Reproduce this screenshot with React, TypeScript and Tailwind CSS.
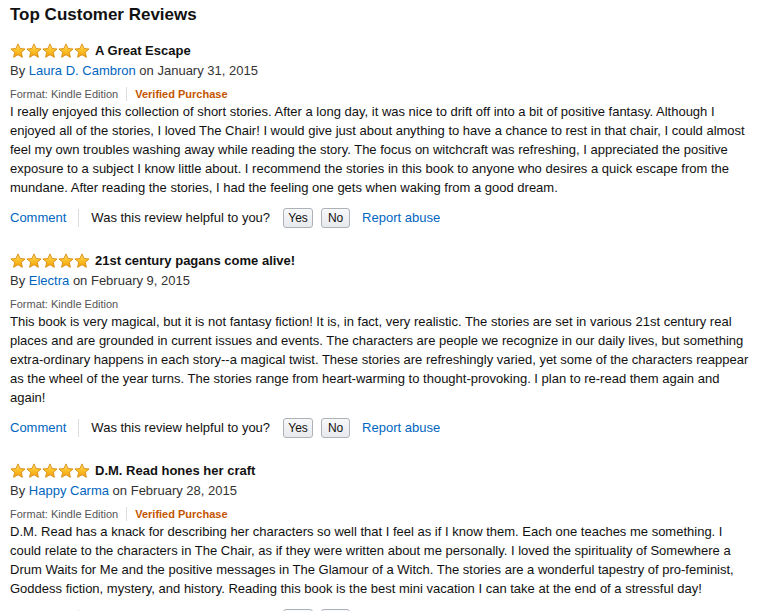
import React from 'react'

type Review = {
  title: string
  author: string
  date: string
  verified: boolean
  body: string
}

const REVIEWS: Review[] = [
  {
    title: 'A Great Escape',
    author: 'Laura D. Cambron',
    date: 'January 31, 2015',
    verified: true,
    body: 'I really enjoyed this collection of short stories. After a long day, it was nice to drift off into a bit of positive fantasy. Although I enjoyed all of the stories, I loved The Chair! I would give just about anything to have a chance to rest in that chair, I could almost feel my own troubles washing away while reading the story. The focus on witchcraft was refreshing, I appreciated the positive exposure to a subject I know little about. I recommend the stories in this book to anyone who desires a quick escape from the mundane. After reading the stories, I had the feeling one gets when waking from a good dream.',
  },
  {
    title: '21st century pagans come alive!',
    author: 'Electra',
    date: 'February 9, 2015',
    verified: false,
    body: 'This book is very magical, but it is not fantasy fiction! It is, in fact, very realistic. The stories are set in various 21st century real places and are grounded in current issues and events. The characters are people we recognize in our daily lives, but something extra-ordinary happens in each story--a magical twist. These stories are refreshingly varied, yet some of the characters reappear as the wheel of the year turns. The stories range from heart-warming to thought-provoking. I plan to re-read them again and again!',
  },
  {
    title: 'D.M. Read hones her craft',
    author: 'Happy Carma',
    date: 'February 28, 2015',
    verified: true,
    body: 'D.M. Read has a knack for describing her characters so well that I feel as if I know them. Each one teaches me something. I could relate to the characters in The Chair, as if they were written about me personally. I loved the spirituality of Somewhere a Drum Waits for Me and the positive messages in The Glamour of a Witch. The stories are a wonderful tapestry of pro-feminist, Goddess fiction, mystery, and history. Reading this book is the best mini vacation I can take at the end of a stressful day!',
  },
]

function Star() {
  return (
    <svg width="16" height="16" viewBox="0 0 16 16" className="block">
      <defs>
        <linearGradient id="starFill" x1="0" y1="0" x2="0" y2="1">
          <stop offset="0" stopColor="#ffe27a" />
          <stop offset="0.45" stopColor="#fcc22d" />
          <stop offset="1" stopColor="#f2a20a" />
        </linearGradient>
      </defs>
      <path
        d="M8 0.9 L10.1 5.5 L15.1 6 L11.3 9.3 L12.4 14.3 L8 11.7 L3.6 14.3 L4.7 9.3 L0.9 6 L5.9 5.5 Z"
        fill="url(#starFill)"
        stroke="#d88a0c"
        strokeWidth="0.9"
        strokeLinejoin="round"
      />
    </svg>
  )
}

function Stars() {
  return (
    <div className="flex">
      {[0, 1, 2, 3, 4].map((i) => (
        <Star key={i} />
      ))}
    </div>
  )
}

function ReviewItem({ review }: { review: Review }) {
  return (
    <div className="mb-[22px]">
      <div className="flex items-center h-[20px] gap-[5px]">
        <Stars />
        <span className="text-[13px] font-bold text-[#111]">{review.title}</span>
      </div>
      <div className="h-[20px] leading-[20px] text-[13px] text-[#333]">
        By <span className="text-[#0066c0]">{review.author}</span> on {review.date}
      </div>
      <div className="flex items-center mt-[5px] h-[16px] text-[11px] text-[#555]">
        <span>Format: Kindle Edition</span>
        {review.verified && (
          <>
            <span className="mx-[8px] h-[14px] w-px bg-[#ddd]" />
            <span className="font-bold text-[#c45500]">Verified Purchase</span>
          </>
        )}
      </div>
      <p className="text-[13px] leading-[19px] text-[#111]">{review.body}</p>
      <div className="flex items-center mt-[10px] h-[22px] text-[13px]">
        <span className="text-[#0066c0]">Comment</span>
        <span className="mx-[12px] h-[18px] w-px bg-[#ddd]" />
        <span className="text-[#111]">Was this review helpful to you?</span>
        <button className="ml-[13px] h-[20px] w-[30px] rounded-[3px] border border-[#adb1b8] bg-gradient-to-b from-[#f7f8fa] to-[#e7e9ec] text-[12px] text-[#111] leading-none">
          Yes
        </button>
        <button className="ml-[8px] h-[20px] w-[29px] rounded-[3px] border border-[#adb1b8] bg-gradient-to-b from-[#f7f8fa] to-[#e7e9ec] text-[12px] text-[#111] leading-none">
          No
        </button>
        <span className="ml-[12px] text-[#0066c0]">Report abuse</span>
      </div>
    </div>
  )
}

export default function App() {
  return (
    <div className="bg-white min-h-screen pl-[10px] pr-[4px] pt-[4px] font-['Liberation_Sans',Arial,sans-serif]">
      <h2 className="text-[17px] leading-[22px] font-bold text-[#111] mb-[15px]">Top Customer Reviews</h2>
      {REVIEWS.map((r) => (
        <ReviewItem key={r.title} review={r} />
      ))}
    </div>
  )
}
